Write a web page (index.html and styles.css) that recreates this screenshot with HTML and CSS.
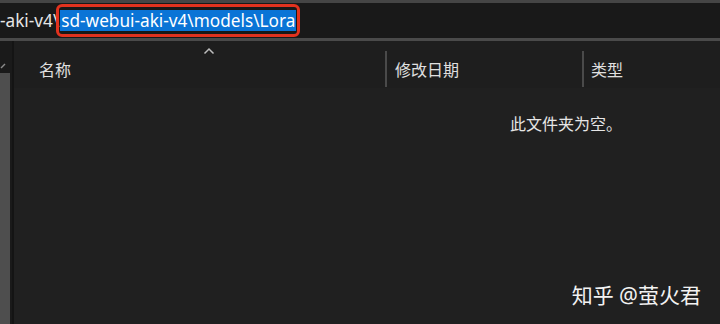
FILE: index.html
```html
<!DOCTYPE html>
<html lang="zh-CN">

<head>
    <meta charset="UTF-8">
    <meta name="viewport" content="width=device-width, initial-scale=1.0">
    <title>Lora</title>
    <link rel="stylesheet" href="styles.css">
</head>

<body>
    <div id="window">
        <div id="addressbar">
            <span class="path">-aki-v4\</span>
            <span id="selbox"><span class="sel">sd-webui-aki-v4\models\Lora</span></span>
        </div>
        <div id="main">
            <div id="sidebar">
                <div class="side-top">
                    <svg width="10" height="10" viewBox="0 0 10 10"><path d="M1 7 L5 3" stroke="#8a8a8a" stroke-width="1.4" fill="none"/></svg>
                </div>
                <div class="side-bar"></div>
            </div>
            <div id="list">
                <div id="header">
                    <div class="col col-name">
                        名称
                        <svg class="sort" width="12" height="8" viewBox="0 0 12 8"><path d="M1.5 6.5 L6 2 L10.5 6.5" stroke="#bdbdbd" stroke-width="1.5" fill="none"/></svg>
                    </div>
                    <div class="col col-date">修改日期</div>
                    <div class="col col-type">类型</div>
                </div>
                <div class="empty">此文件夹为空。</div>
                <div class="mark">知乎 @萤火君</div>
            </div>
        </div>
    </div>
</body>

</html>
```

FILE: styles.css
```css
* {
    margin: 0;
    padding: 0;
    box-sizing: border-box;
}

body {
    width: 720px;
    height: 324px;
    overflow: hidden;
    background-color: #1f1f1f;
    font-family: "Noto Sans", "Noto Sans CJK SC", sans-serif;
    color: #e8e8e8;
}

#window {
    display: flex;
    flex-direction: column;
    height: 100%;
    border-top: 3px solid #454545;
}

#addressbar {
    height: 38px;
    display: flex;
    align-items: center;
    background-color: #191919;
    border-bottom: 3px solid #4a4a4a;
    font-size: 17.2px;
}

.path {
    color: #e6e6e6;
}

#selbox {
    margin-left: -3px;
    padding: 3px 1px;
    border: 3px solid #e2321e;
    border-radius: 6px;
    display: flex;
}

.sel {
    background-color: #0a74d6;
    color: #ffffff;
    line-height: 21px;
    padding: 0 1px;
}

#main {
    flex: 1;
    display: flex;
}

#sidebar {
    width: 14px;
    display: flex;
    flex-direction: column;
    background-color: #1a1a1a;
    border-right: 2px solid #141414;
}

.side-top {
    height: 32px;
    padding-top: 13px;
}

.side-bar {
    flex: 1;
    width: 10px;
    background-color: #4e4e4e;
}

#list {
    flex: 1;
    position: relative;
    background-color: #202020;
}

#header {
    height: 47px;
    display: flex;
    align-items: center;
    padding-top: 8px;
    font-size: 16px;
    color: #e0e0e0;
    background-color: #1e1e1e;
}

.col {
    height: 36px;
    display: flex;
    align-items: center;
}

.col-name {
    width: 371px;
    padding-left: 25px;
    position: relative;
}

.sort {
    position: absolute;
    left: 189px;
    top: -4px;
}

.col-date {
    width: 197px;
    padding-left: 8px;
    border-left: 2px solid #4a4a4a;
}

.col-type {
    flex: 1;
    padding-left: 7px;
    border-left: 2px solid #4a4a4a;
}

.empty {
    margin-top: 23px;
    padding-left: 496px;
    font-size: 16px;
    color: #e6e6e6;
}

.mark {
    position: absolute;
    right: 19px;
    bottom: 15px;
    font-size: 21px;
    color: #f2f2f2;
}
```
